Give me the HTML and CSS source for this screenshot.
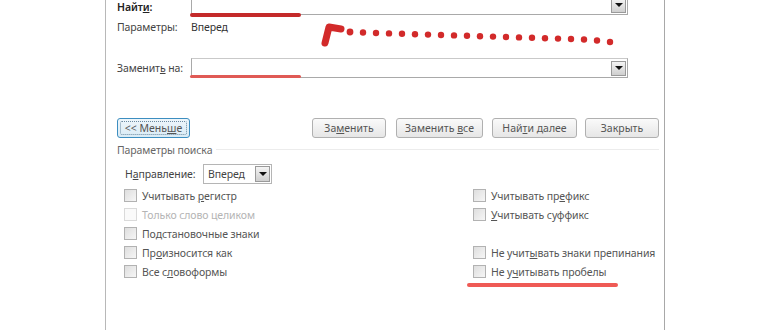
FILE: index.html
```html
<!DOCTYPE html>
<html lang="ru">
<head>
<meta charset="utf-8">
<title>Найти и заменить</title>
<link rel="stylesheet" href="styles.css">
</head>
<body>
<div class="dialog">
  <div class="row find-row">
    <span class="lbl strong">Найт<u>и</u>:</span>
    <div class="combo"><span class="combo-btn"><i class="tri"></i></span></div>
  </div>
  <div class="row opts-row">
    <span class="lbl">Параметры:</span>
    <span class="val">Вперед</span>
  </div>
  <div class="row replace-row">
    <span class="lbl">Заменит<u>ь</u> на:</span>
    <div class="combo"><span class="combo-btn"><i class="tri"></i></span></div>
  </div>
  <div class="row btn-row">
    <button class="btn less"><span class="focus"><span>&lt;&lt; Мень<u>ш</u>е</span></span></button>
    <div class="btn-group">
      <button class="btn w74"><span>За<u>м</u>енить</span></button>
      <button class="btn w87"><span>Заменить <u>в</u>се</span></button>
      <button class="btn w85"><span>Най<u>т</u>и далее</span></button>
      <button class="btn w74"><span>Закрыть</span></button>
    </div>
  </div>
  <div class="group-title"><span>Параметры поиска</span><i class="sep"></i></div>
  <div class="row dir-row">
    <span class="dir-lbl">Н<u>а</u>правление:</span>
    <div class="select"><span>Вперед</span><span class="combo-btn sel-btn"><i class="tri"></i></span></div>
  </div>
  <div class="checks">
    <div class="col">
      <div class="chk"><i class="box"></i><span>Учитывать <u>р</u>егистр</span></div>
      <div class="chk disabled"><i class="box"></i><span>Только слово целиком</span></div>
      <div class="chk"><i class="box"></i><span>По<u>д</u>становочные знаки</span></div>
      <div class="chk"><i class="box"></i><span>Пр<u>о</u>износится как</span></div>
      <div class="chk"><i class="box"></i><span>Все с<u>л</u>овоформы</span></div>
    </div>
    <div class="col right">
      <div class="chk"><i class="box"></i><span>Учитывать пр<u>е</u>фикс</span></div>
      <div class="chk"><i class="box"></i><span><u>У</u>читывать суффикс</span></div>
      <div class="chk empty"></div>
      <div class="chk"><i class="box"></i><span>Не учит<u>ы</u>вать знаки препинания</span></div>
      <div class="chk"><i class="box"></i><span>Не у<u>ч</u>итывать пробелы</span></div>
    </div>
  </div>

  <i class="mark mark-find"></i>
  <i class="mark mark-replace"></i>
  <i class="mark mark-spaces"></i>
  <svg class="arrow" width="310" height="32" viewBox="0 0 310 32">
    <g fill="none" stroke="#d22a2a" stroke-width="7" stroke-linecap="round" stroke-linejoin="round">
      <path d="M7 23 L11 7 L23 9"/>
    </g>
    <g fill="#d22a2a">
      <circle cx="32" cy="12" r="3.4"/>
      <circle cx="45" cy="12.5" r="3.2"/>
      <circle cx="58" cy="13" r="3.2"/>
      <circle cx="71" cy="13.4" r="3.2"/>
      <circle cx="84" cy="13.8" r="3.2"/>
      <circle cx="97" cy="14.2" r="3.2"/>
      <circle cx="110" cy="14.6" r="3.2"/>
      <circle cx="123" cy="15" r="3.2"/>
      <circle cx="136" cy="15.4" r="3.2"/>
      <circle cx="149" cy="15.8" r="3.2"/>
      <circle cx="162" cy="16.2" r="3.2"/>
      <circle cx="175" cy="16.6" r="3.2"/>
      <circle cx="188" cy="17" r="3.2"/>
      <circle cx="201" cy="17.4" r="3.2"/>
      <circle cx="214" cy="17.8" r="3.2"/>
      <circle cx="227" cy="18.2" r="3.2"/>
      <circle cx="240" cy="18.6" r="3.2"/>
      <circle cx="253" cy="19" r="3.2"/>
      <circle cx="266" cy="19.5" r="3.2"/>
      <circle cx="279" cy="20.5" r="3.2"/>
      <circle cx="292" cy="22" r="3.2"/>
    </g>
  </svg>
</div>
</body>
</html>
```
FILE: styles.css
```css
* { box-sizing: border-box; }
html, body { margin: 0; padding: 0; background: #fff; overflow: hidden; }
body {
  font-family: "Noto Sans", "Open Sans", sans-serif;
  font-size: 10.5px;
  letter-spacing: -0.1px;
  color: #444;
}
u { text-decoration: underline; text-underline-offset: 1px; }

.dialog {
  position: relative;
  margin-left: 105px;
  width: 560px;
  height: 340px;
  margin-top: -5px;
  padding-left: 11px;
  border-left: 1px solid #b8b8b8;
  border-right: 1px solid #a8a8a8;
}

.row { display: flex; align-items: center; }
.lbl { width: 74px; flex: none; }
.strong { font-weight: 600; color: #222; align-self: flex-end; padding-bottom: 1px; }

.combo {
  position: relative;
  width: 437px;
  height: 20px;
  border: 1px solid #a9a9a9;
  border-top-color: #c9c9c9;
  background: #fff;
  display: flex;
  justify-content: flex-end;
  align-items: center;
  padding-right: 1px;
}
.combo-btn {
  width: 15px;
  height: 15px;
  border: 1px solid #9a9a9a;
  background: linear-gradient(#f4f4f4, #cfcfcf);
  display: flex;
  align-items: center;
  justify-content: center;
}
.tri {
  width: 0; height: 0;
  border-left: 4px solid transparent;
  border-right: 4px solid transparent;
  border-top: 4px solid #111;
}

.find-row { height: 20px; }
.opts-row { height: 14px; margin-top: 5px; }
.replace-row { height: 20px; margin-top: 24px; }
.val { color: #333; }

.btn-row { margin-top: 40px; height: 20px; }
.btn {
  font: inherit;
  color: #555;
  height: 20px;
  padding: 0;
  border: 1px solid #b0b0b0;
  border-radius: 3px;
  background: linear-gradient(#fafafa, #e6e6e6);
  display: flex;
  align-items: center;
  justify-content: center;
}
.less {
  width: 73px;
  border-color: #3d8ec0;
  background: linear-gradient(#eef6fb, #d9ebf5);
  padding: 2px;
}
.less .focus {
  flex: 1;
  align-self: stretch;
  display: flex;
  align-items: center;
  justify-content: center;
  border: 1px dotted #6b8aa0;
  border-radius: 2px;
}
.btn-group { display: flex; gap: 10px; margin-left: 122px; }
.w74 { width: 74px; }
.w87 { width: 87px; }
.w85 { width: 85px; }
.btn-group .btn:nth-child(3) { margin-left: -1px; }
.btn-group .btn:nth-child(4) { margin-left: -2px; }

.group-title {
  display: flex;
  align-items: center;
  margin-top: 5px;
  height: 13px;
  color: #666;
}
.group-title .sep {
  flex: 1;
  height: 1px;
  margin: 0 5px 0 4px;
  background: #ececec;
}

.dir-row { margin-top: 8px; height: 20px; padding-left: 8px; }
.dir-lbl { width: 78px; flex: none; }
.select {
  width: 69px;
  height: 20px;
  border: 1px solid #b5b5b5;
  display: flex;
  align-items: center;
  justify-content: space-between;
  padding-left: 4px;
  padding-right: 1px;
}
.sel-btn { height: 16px; width: 15px; }

.checks { display: flex; margin-top: 2px; padding-left: 7px; }
.col { width: 349px; flex: none; display: flex; flex-direction: column; }
.col.right { width: 185px; }
.chk {
  height: 19px;
  display: flex;
  align-items: center;
  color: #555;
  white-space: nowrap;
}
.chk .box {
  width: 13px;
  height: 13px;
  flex: none;
  margin-right: 5px;
  border: 1px solid #b2b2b2;
  background: linear-gradient(135deg, #dedede, #f6f6f6);
}
.chk.disabled { color: #b4b4b4; }
.chk.disabled .box { border-color: #dadada; background: #fafafa; }

.mark {
  position: absolute;
  display: block;
  border-radius: 3px;
}
.mark-find { left: 84px; top: 18px; width: 111px; height: 4px; background: #c42a2a; }
.mark-replace { left: 84px; top: 80px; width: 111px; height: 3px; background: #e05a55; }
.mark-spaces { left: 361px; top: 288px; width: 151px; height: 4px; background: #ef5a55; }
.arrow { position: absolute; left: 212px; top: 25px; }
```
